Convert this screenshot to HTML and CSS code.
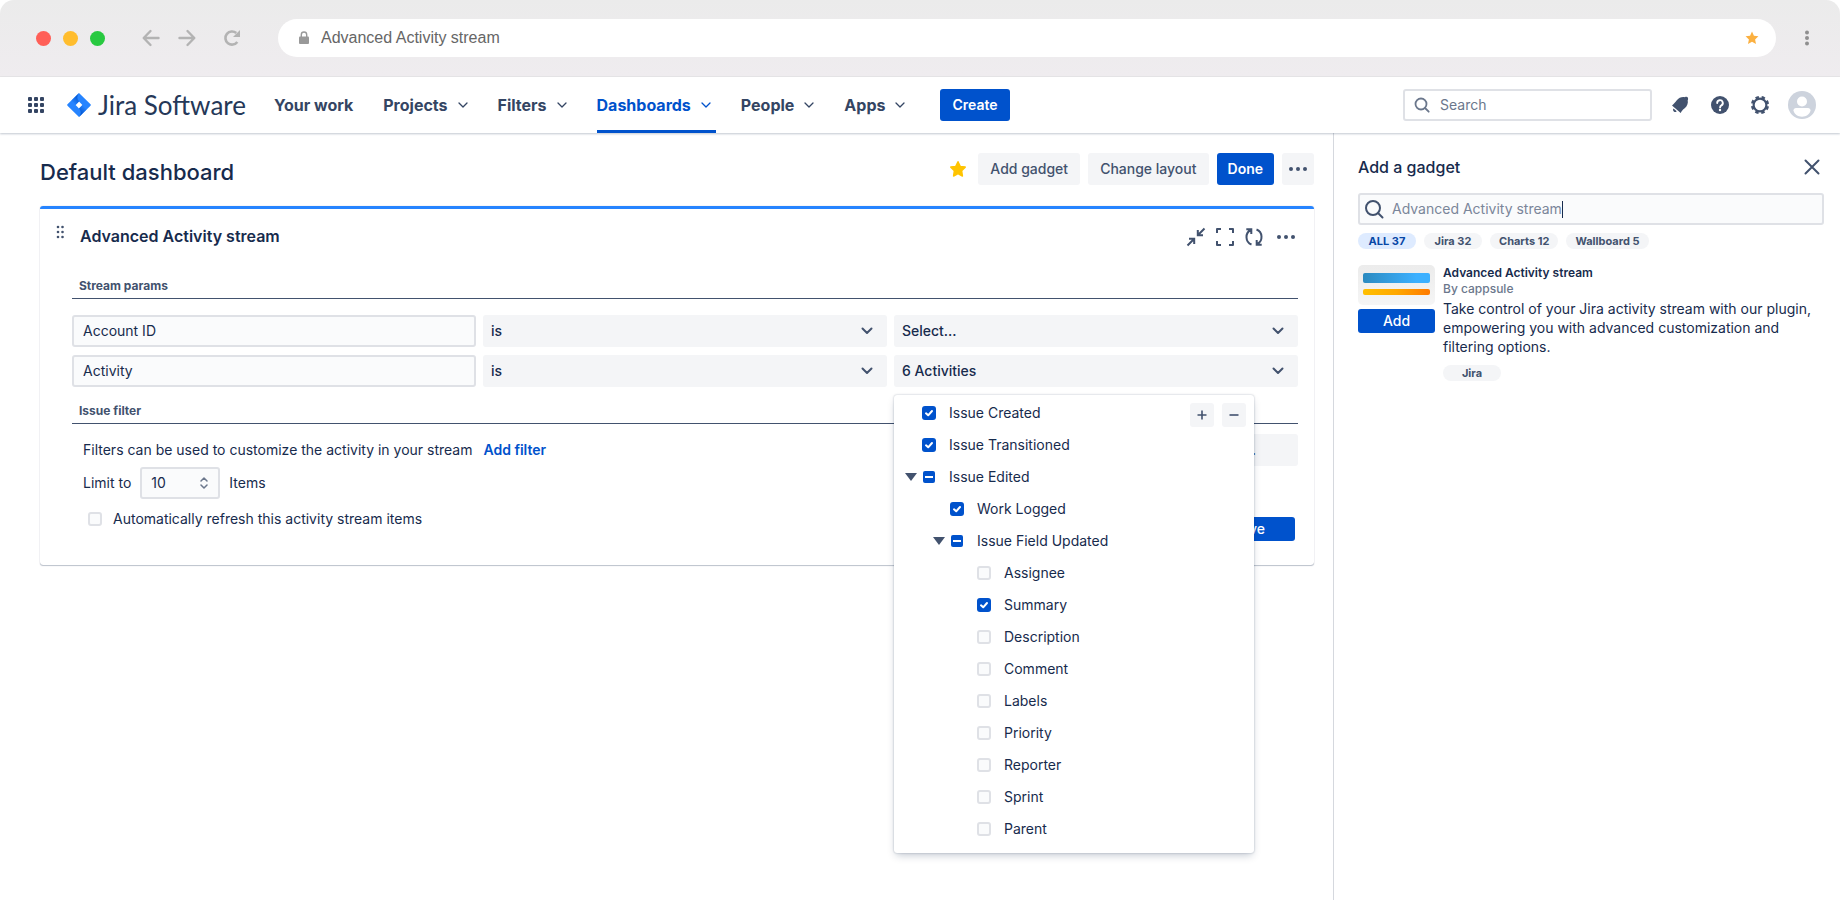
FILE: index.html
```html
<!DOCTYPE html>
<html lang="en">
  <head>
    <meta charset="UTF-8" />
    <meta name="viewport" content="width=device-width, initial-scale=1" />
    <title>Advanced Activity stream</title>
    <link rel="stylesheet" href="styles.css">
  </head>
  <body>
    <div class="chrome">
      <div class="lights">
        <span class="light red"></span>
        <span class="light yellow"></span>
        <span class="light green"></span>
      </div>
      <div class="history">
        <button class="plain" aria-label="Back">
          <svg width="18" height="18" viewBox="0 0 18 18" fill="none" stroke="#b3b3b3" stroke-width="2.4" stroke-linecap="round" stroke-linejoin="round"><path d="M16.5 9H2M8.5 2 1.700 9l6.800 7" /></svg>
        </button>
        <button class="plain" aria-label="Forward">
          <svg width="18" height="18" viewBox="0 0 18 18" fill="none" stroke="#b3b3b3" stroke-width="2.4" stroke-linecap="round" stroke-linejoin="round"><path d="M1.500 9H16M9.500 2l6.800 7-6.800 7" /></svg>
        </button>
        <button class="plain reload" aria-label="Reload">
          <svg width="18" height="18" viewBox="0 0 18 18"><path d="M14.300 13A6.600 6.600 0 1 1 13.300 4" fill="none" stroke="#b3b3b3" stroke-width="2.600" /><path d="M17 1v7h-7z" fill="#b3b3b3" /></svg>
        </button>
      </div>
      <div class="address">
        <svg width="12" height="14" viewBox="0 0 12 14"><rect x="1" y="5.500" width="10" height="7.500" rx="1" fill="#999" /><path d="M3.300 6V3.700a2.700 2.700 0 0 1 5.400 0V6" fill="none" stroke="#999" stroke-width="1.400" /></svg>
        <input type="text" aria-label="Address" value="Advanced Activity stream" />
        <svg width="14" height="14" viewBox="0 0 24 24" fill="#fbb040"><path d="M12 1l3.300 7.200 7.700.9-5.700 5.300 1.600 7.800L12 18.300l-6.900 3.900 1.600-7.800L1 9.100l7.700-.9z" /></svg>
      </div>
      <button class="plain" aria-label="Menu">
        <svg width="16" height="18" viewBox="0 0 16 18" fill="#8f8f8f"><circle cx="8" cy="3.500" r="2" /><circle cx="8" cy="9" r="2" /><circle cx="8" cy="14.500" r="2" /></svg>
      </button>
    </div>

    <header class="topbar">
      <button class="plain switcher" aria-label="Switch to">
        <svg width="16" height="16" viewBox="0 0 16 16" fill="#344563"><rect width="4" height="4" rx="1" /><rect x="6" width="4" height="4" rx="1" /><rect x="12" width="4" height="4" rx="1" /><rect y="6" width="4" height="4" rx="1" /><rect x="6" y="6" width="4" height="4" rx="1" /><rect x="12" y="6" width="4" height="4" rx="1" /><rect y="12" width="4" height="4" rx="1" /><rect x="6" y="12" width="4" height="4" rx="1" /><rect x="12" y="12" width="4" height="4" rx="1" /></svg>
      </button>
      <a class="logo" href="#">
        <svg width="24" height="26" viewBox="0 0 24 26">
          <defs>
            <linearGradient id="jiraTop" x1="12" y1="5" x2="6" y2="11" gradientUnits="userSpaceOnUse"><stop offset="0" stop-color="#0052cc" /><stop offset="1" stop-color="#2684ff" /></linearGradient>
            <linearGradient id="jiraBottom" x1="12" y1="21" x2="18" y2="15" gradientUnits="userSpaceOnUse"><stop offset="0" stop-color="#0052cc" /><stop offset="1" stop-color="#2684ff" /></linearGradient>
          </defs>
          <path d="M12 1 23.500 12.300a1 1 0 0 1 0 1.400L12 25 .5 13.700a1 1 0 0 1 0-1.400zM12 9.500 8.600 13l3.400 3.500 3.400-3.500z" fill="#2684ff" fill-rule="evenodd" />
          <path d="M12 9.500c-2.300-2.400-2.300-6.100 0-8.500L4.500 8.500l4 4.500z" fill="url(#jiraTop)" />
          <path d="M12 16.500c2.300 2.400 2.300 6.100 0 8.500l7.500-7.500-4-4.500z" fill="url(#jiraBottom)" />
        </svg>
        Jira Software
      </a>
      <nav class="menu">
        <a href="#">Your work</a>
        <a href="#">Projects<svg class="caret" viewBox="0 0 20 20"><path d="M6 8l4 4 4-4" /></svg></a>
        <a href="#">Filters<svg class="caret" viewBox="0 0 20 20"><path d="M6 8l4 4 4-4" /></svg></a>
        <a href="#" class="active">Dashboards<svg class="caret" viewBox="0 0 20 20"><path d="M6 8l4 4 4-4" /></svg></a>
        <a href="#">People<svg class="caret" viewBox="0 0 20 20"><path d="M6 8l4 4 4-4" /></svg></a>
        <a href="#">Apps<svg class="caret" viewBox="0 0 20 20"><path d="M6 8l4 4 4-4" /></svg></a>
      </nav>
      <button class="btn primary create">Create</button>
      <label class="search">
        <svg width="16" height="16" viewBox="0 0 16 16" fill="none" stroke="#6b778c" stroke-width="1.800" stroke-linecap="round"><circle cx="7" cy="7" r="5.500" /><path d="M11 11l3.700 3.700" /></svg>
        <input type="search" placeholder="Search" aria-label="Search" />
      </label>
      <div class="tools">
        <button class="plain" aria-label="Notifications">
          <svg width="20" height="20" viewBox="0 0 20 20" fill="#42526e"><path d="M2 10.500c1.500-1.200 3-2.800 4.600-5 2.200-3 5.600-3.900 8.300-3.300.8-.6 2.600-.5 2.900.2.400.8.400 2-.1 2.800.6 2.900-.4 6-3.300 8.200-2 1.500-2.900 2.700-3.700 4.600z" /><path d="M3.500 13.600a2 2 0 0 0 3.200 2.600z" /></svg>
        </button>
        <button class="plain" aria-label="Help">
          <svg width="20" height="20" viewBox="0 0 20 20"><circle cx="10" cy="10" r="9" fill="#42526e" /><path d="M7.200 8a2.800 2.800 0 1 1 4.200 2.400c-.9.500-1.300.9-1.300 2" fill="none" stroke="#fff" stroke-width="1.900" stroke-linecap="round" /><circle cx="10" cy="15" r="1.200" fill="#fff" /></svg>
        </button>
        <button class="plain" aria-label="Settings">
          <svg width="20" height="20" viewBox="0 0 20 20" fill="none" stroke="#42526e"><circle cx="10" cy="10" r="6.400" stroke-width="2.200" /><circle cx="10" cy="10" r="7.800" stroke-width="2.600" stroke-dasharray="3.400 2.726" stroke-dashoffset="-1.363" /></svg>
        </button>
        <button class="plain" aria-label="Your profile">
          <svg width="28" height="28" viewBox="0 0 28 28"><circle cx="14" cy="14" r="14" fill="#cdd3dd" /><circle cx="14" cy="10.500" r="5" fill="#fff" /><path d="M5.500 19.500c0-1.500 1-2.500 2.500-2.500h12c1.500 0 2.500 1 2.500 2.500-.6 3.600-4.300 6.200-8.500 6.200s-7.900-2.600-8.500-6.200z" fill="#fff" /></svg>
        </button>
      </div>
    </header>

    <div class="page">
      <main class="dashboard">
        <div class="dashboard-head">
          <h1>Default dashboard</h1>
          <button class="plain star" aria-label="Starred">
            <svg width="16" height="16" viewBox="0 0 16 16" fill="#ffc400" stroke="#ffc400" stroke-width="1.500" stroke-linejoin="round"><path d="M8 .8l2.200 4.600 5 .7-3.600 3.600.8 5.300L8 12.600l-4.400 2.400.8-5.300L.8 6.100l5-.7z" /></svg>
          </button>
          <button class="btn">Add gadget</button>
          <button class="btn">Change layout</button>
          <button class="btn primary">Done</button>
          <button class="btn more" aria-label="More">
            <svg width="20" height="8" viewBox="0 0 20 8" fill="#42526e"><circle cx="3" cy="4" r="2" /><circle cx="10" cy="4" r="2" /><circle cx="17" cy="4" r="2" /></svg>
          </button>
        </div>

        <section class="gadget">
          <div class="gadget-head">
            <svg class="drag" width="8" height="14" viewBox="0 0 8 14" fill="#42526e"><circle cx="2" cy="2" r="1.300" /><circle cx="6.500" cy="2" r="1.300" /><circle cx="2" cy="7" r="1.300" /><circle cx="6.500" cy="7" r="1.300" /><circle cx="2" cy="12" r="1.300" /><circle cx="6.500" cy="12" r="1.300" /></svg>
            <h2>Advanced Activity stream</h2>
            <button class="plain" aria-label="Minimize">
              <svg width="20" height="20" viewBox="0 0 20 20" fill="none" stroke="#42526e" stroke-width="2"><path d="M1.500 18.500l6-6M3 11.800h5.200V17M18.500 1.500l-6 6M17 8.200h-5.200V3" /></svg>
            </button>
            <button class="plain" aria-label="Maximize">
              <svg width="20" height="20" viewBox="0 0 20 20" fill="none" stroke="#42526e" stroke-width="2" stroke-linejoin="round"><path d="M2 6V2h4M14 2h4v4M18 14v4h-4M6 18H2v-4" /></svg>
            </button>
            <button class="plain" aria-label="Refresh">
              <svg width="20" height="20" viewBox="0 0 20 20" fill="none" stroke="#42526e" stroke-width="2"><path d="M7.500 17.500C1 15 1 6 6.500 3M2.300 2.200h5V7M12.500 2.500C19 5 19 14 13.500 17M17.700 17.800h-5V13" /></svg>
            </button>
            <button class="plain menu-dots" aria-label="More actions">
              <svg width="20" height="8" viewBox="0 0 20 8" fill="#42526e"><circle cx="3" cy="4" r="2" /><circle cx="10" cy="4" r="2" /><circle cx="17" cy="4" r="2" /></svg>
            </button>
          </div>

          <form class="gadget-body">
            <h3>Stream params</h3>
            <div class="params">
              <input class="field" type="text" aria-label="Param" value="Account ID" />
              <select class="select" aria-label="Account condition"><option>is</option></select>
              <select class="select" aria-label="Account"><option>Select...</option></select>
              <input class="field" type="text" aria-label="Param" value="Activity" />
              <select class="select" aria-label="Activity condition"><option>is</option></select>
              <div class="picker">
                <select class="select" aria-label="Activities"><option>6 Activities</option></select>
                <div class="tree">
                  <div class="tree-tools">
                    <button type="button" aria-label="Expand all"><svg width="10" height="10" viewBox="0 0 10 10" stroke="#42526e" stroke-width="1.600"><path d="M5 .5v9M.5 5h9" /></svg></button>
                    <button type="button" aria-label="Collapse all"><svg width="10" height="10" viewBox="0 0 10 10" stroke="#42526e" stroke-width="1.600"><path d="M.5 5h9" /></svg></button>
                  </div>
                  <label class="node"><input type="checkbox" checked />Issue Created</label>
                  <label class="node"><input type="checkbox" checked />Issue Transitioned</label>
                  <label class="node open"><input type="checkbox" class="partial" />Issue Edited</label>
                  <div class="branch">
                    <label class="node"><input type="checkbox" checked />Work Logged</label>
                    <label class="node open"><input type="checkbox" class="partial" />Issue Field Updated</label>
                    <div class="branch">
                      <label class="node"><input type="checkbox" />Assignee</label>
                      <label class="node"><input type="checkbox" checked />Summary</label>
                      <label class="node"><input type="checkbox" />Description</label>
                      <label class="node"><input type="checkbox" />Comment</label>
                      <label class="node"><input type="checkbox" />Labels</label>
                      <label class="node"><input type="checkbox" />Priority</label>
                      <label class="node"><input type="checkbox" />Reporter</label>
                      <label class="node"><input type="checkbox" />Sprint</label>
                      <label class="node"><input type="checkbox" />Parent</label>
                    </div>
                  </div>
                </div>
              </div>
            </div>

            <h3>Issue filter</h3>
            <div class="filter-row">
              <span>Filters can be used to customize the activity in your stream</span>
              <a href="#">Add filter</a>
              <button type="button" class="btn select-filter">Select...</button>
            </div>
            <div class="limit-row">
              <label for="limit">Limit to</label>
              <input class="field" id="limit" type="number" value="10" />
              <span>Items</span>
            </div>
            <div class="save-row">
              <label class="refresh"><input type="checkbox" />Automatically refresh this activity stream items</label>
              <button type="button" class="btn primary small save">Save</button>
            </div>
          </form>
        </section>
      </main>

      <aside class="panel">
        <div class="panel-head">
          <h2>Add a gadget</h2>
          <button class="plain" aria-label="Close">
            <svg width="24" height="24" viewBox="0 0 24 24" stroke="#42526e" stroke-width="2" stroke-linecap="round"><path d="M5.500 5.500l13 13M18.500 5.500l-13 13" /></svg>
          </button>
        </div>
        <label class="panel-search">
          <svg width="20" height="20" viewBox="0 0 20 20" fill="none" stroke="#42526e" stroke-width="2" stroke-linecap="round"><circle cx="9" cy="9" r="7" /><path d="M14 14l4.500 4.500" /></svg>
          <input type="text" aria-label="Search gadgets" value="Advanced Activity stream" />
          <span class="cursor"></span>
        </label>
        <div class="chips">
          <button class="chip selected">ALL 37</button>
          <button class="chip">Jira 32</button>
          <button class="chip">Charts 12</button>
          <button class="chip">Wallboard 5</button>
        </div>
        <article class="result">
          <div class="result-side">
            <div class="thumb">
              <span class="bar blue"></span>
              <span class="bar orange"></span>
            </div>
            <button class="btn primary small">Add</button>
          </div>
          <div class="result-text">
            <h4>Advanced Activity stream</h4>
            <p class="author">By cappsule</p>
            <p>Take control of your Jira activity stream with our plugin, empowering you with advanced customization and filtering options.</p>
            <span class="chip">Jira</span>
          </div>
        </article>
      </aside>
    </div>
  </body>
</html>
```

FILE: styles.css
```css
* {
  box-sizing: border-box;
}
body {
  margin: 0;
  min-height: 100vh;
  display: flex;
  flex-direction: column;
  font-family: Inter, Roboto, sans-serif;
  font-size: 14px;
  line-height: 20px;
  color: #172b4d;
  background: #fff;
}
h1,
h2,
h3,
h4,
p {
  margin: 0;
}
a {
  color: #0052cc;
  text-decoration: none;
}
button,
input,
select {
  font: inherit;
  color: inherit;
}
input {
  min-width: 0;
}
svg {
  display: block;
  flex: none;
}
.plain {
  padding: 0;
  border: none;
  background: none;
}

/* browser bar */
.chrome {
  display: flex;
  align-items: center;
  height: 77px;
  padding: 0 25px 0 36px;
  border-bottom: 1px solid #e8e7e8;
  border-radius: 14px 14px 0 0;
  background: linear-gradient(#ebebeb, #efecef);
}
.lights {
  display: flex;
  gap: 12px;
}
.light {
  width: 15px;
  height: 15px;
  border-radius: 50%;
}
.red {
  background: #ff5f57;
}
.yellow {
  background: #ffbd2e;
}
.green {
  background: #28c940;
}
.history {
  display: flex;
  gap: 18px;
  margin: 0 37px;
}
.reload {
  margin-left: 9px;
}
.address {
  flex: 1;
  display: flex;
  align-items: center;
  height: 38px;
  margin-right: 23px;
  padding: 0 17px 0 20px;
  border-radius: 19px;
  background: #fff;
}
.address input {
  flex: 1;
  margin-left: 11px;
  padding: 0;
  border: none;
  font-family: "Liberation Sans", Arial, sans-serif;
  font-size: 16px;
  color: #666;
}

/* top navigation */
.topbar {
  position: relative;
  display: flex;
  align-items: center;
  height: 56px;
  padding: 0 24px 0 28px;
  box-shadow: 0 1px 2px rgba(9, 30, 66, 0.25);
}
.logo {
  display: flex;
  align-items: center;
  gap: 7px;
  margin: 0 28px 0 23px;
  font-family: Lato, sans-serif;
  font-size: 26px;
  color: #253858;
  white-space: nowrap;
}
.menu {
  display: flex;
  gap: 25px;
  height: 100%;
}
.menu a {
  display: flex;
  align-items: center;
  gap: 5px;
  border-top: 3px solid transparent;
  border-bottom: 3px solid transparent;
  font-size: 16px;
  font-weight: 700;
  color: #344563;
  white-space: nowrap;
}
.menu a:first-child {
  margin-right: 5px;
}
.menu .active {
  border-bottom-color: #0052cc;
  color: #0052cc;
}
.caret {
  width: 20px;
  height: 20px;
  fill: none;
  stroke: currentColor;
  stroke-width: 1.3;
  stroke-linecap: round;
  stroke-linejoin: round;
}
.btn {
  height: 32px;
  padding: 0 12px;
  border: none;
  border-radius: 3px;
  background: #f4f5f7;
  font-weight: 500;
  color: #42526e;
  white-space: nowrap;
}
.primary {
  padding: 0 11px;
  background: #0052cc;
  font-weight: 600;
  color: #fff;
}
.small {
  height: 24px;
  font-weight: 500;
}
.create {
  margin-left: 30px;
  padding: 0 12px;
}
.search {
  display: flex;
  align-items: center;
  gap: 10px;
  width: 249px;
  height: 32px;
  margin-left: auto;
  padding: 0 9px;
  border: 2px solid #dfe1e6;
  border-radius: 3px;
}
.search input {
  flex: 1;
  padding: 0;
  border: none;
  background: none;
}
.search input::placeholder {
  color: #6b778c;
  opacity: 1;
}
.tools {
  display: flex;
  align-items: center;
  gap: 20px;
  margin-left: 18px;
}
.tools button:last-child {
  margin-left: -2px;
}

/* dashboard */
.page {
  flex: 1;
  display: flex;
}
.dashboard {
  flex: 1;
  padding: 20px 19px 40px 40px;
}
.dashboard-head {
  display: flex;
  align-items: center;
  gap: 8px;
  margin-bottom: 21px;
}
.dashboard-head h1 {
  flex: 1;
  padding-top: 6px;
  font-size: 22px;
  font-weight: 500;
  line-height: 26px;
}
.star {
  margin-right: 4px;
}
.more {
  width: 32px;
  padding: 0 6px;
}
.gadget {
  border-top: 3px solid #2684ff;
  border-radius: 3px;
  box-shadow: 0 1px 1px rgba(9, 30, 66, 0.25), 0 0 1px rgba(9, 30, 66, 0.31);
}
.gadget-head {
  display: flex;
  align-items: center;
  gap: 9px;
  height: 56px;
  padding: 0 18px 0 16px;
}
.gadget-head h2 {
  flex: 1;
  padding: 0 0 3px 7px;
}
.gadget-head h2,
.panel h2 {
  font-size: 16px;
  font-weight: 600;
}
.drag {
  margin-bottom: 11px;
}
.menu-dots {
  margin-left: 3px;
}
.gadget-body {
  padding: 0 16px 24px 32px;
}
.gadget-body h3 {
  padding: 11px 7px 2px;
  border-bottom: 1px solid #42526e;
  font-size: 12px;
  font-weight: 700;
  color: #42526e;
}
.params {
  display: grid;
  grid-template-columns: repeat(3, 1fr);
  gap: 8px 7px;
  margin: 16px 0 3px;
}
.field,
.select {
  width: 100%;
  height: 32px;
  border-radius: 3px;
}
.field {
  padding: 0 9px 1px;
  border: 2px solid #dfe1e6;
  background: #fafbfc;
}
.select {
  display: block;
  padding: 0 8px;
  border: none;
  appearance: none;
  font-weight: 500;
  background: #f4f5f7 url("data:image/svg+xml,%3Csvg xmlns='http://www.w3.org/2000/svg' width='12' height='8' fill='none' stroke='%2342526e' stroke-width='2' stroke-linecap='round' stroke-linejoin='round'%3E%3Cpath d='M1.500 1.500 6 6l4.500-4.500'/%3E%3C/svg%3E") no-repeat right 14px center;
}
.picker {
  position: relative;
}

/* activity tree dropdown */
.tree {
  position: absolute;
  top: 40px;
  left: 0;
  z-index: 1;
  width: 360px;
  padding: 2px 0 8px 28px;
  border-radius: 3px;
  background: #fff;
  box-shadow: 0 4px 8px -2px rgba(9, 30, 66, 0.25), 0 0 2px rgba(9, 30, 66, 0.31);
}
.tree-tools {
  position: absolute;
  top: 8px;
  right: 8px;
  display: flex;
  gap: 8px;
}
.tree-tools button {
  display: flex;
  align-items: center;
  justify-content: center;
  width: 24px;
  height: 24px;
  padding: 0;
  border: none;
  border-radius: 3px;
  background: #f4f5f7;
}
.node {
  position: relative;
  display: flex;
  align-items: center;
  gap: 13px;
  height: 32px;
}
.branch {
  padding-left: 28px;
}
.branch .branch {
  padding-left: 27px;
}
.open::before {
  content: "";
  position: absolute;
  left: -17px;
  border: 6px solid transparent;
  border-top: 8px solid #42526e;
  border-bottom: none;
}
input[type="checkbox"] {
  flex: none;
  width: 14px;
  height: 14px;
  margin: 0;
  border: 2px solid #dfe1e6;
  border-radius: 3px;
  appearance: none;
  background: #fafbfc;
}
input[type="checkbox"]:checked {
  border: none;
  background: #0052cc url("data:image/svg+xml,%3Csvg xmlns='http://www.w3.org/2000/svg' width='14' height='14' fill='none' stroke='white' stroke-width='2' stroke-linecap='round' stroke-linejoin='round'%3E%3Cpath d='M4 7.300 6.200 9.300 10 5'/%3E%3C/svg%3E") center;
}
input[type="checkbox"].partial {
  width: 12px;
  height: 12px;
  margin: 0 1px;
  border: none;
  border-radius: 2px;
  background: linear-gradient(#fff, #fff) center / 8px 2px no-repeat #0052cc;
}

.filter-row,
.limit-row {
  display: flex;
  align-items: center;
  height: 32px;
  padding-left: 11px;
}
.filter-row {
  gap: 11px;
  margin: 10px 0 1px;
}
.filter-row a {
  font-weight: 600;
}
.select-filter {
  margin-left: auto;
  padding: 0 42px;
}
.limit-row {
  gap: 9px;
}
.limit-row .field {
  width: 80px;
  appearance: textfield;
  background: #fafbfc url("data:image/svg+xml,%3Csvg xmlns='http://www.w3.org/2000/svg' width='8' height='12' fill='none' stroke='%236b778c' stroke-width='1.500' stroke-linecap='round' stroke-linejoin='round'%3E%3Cpath d='M1 4l3-3 3 3M1 8l3 3 3-3'/%3E%3C/svg%3E") no-repeat right 10px center;
}
.limit-row .field::-webkit-inner-spin-button {
  display: none;
}
.save-row {
  display: flex;
  align-items: flex-start;
  justify-content: space-between;
  margin-top: 8px;
  padding: 0 3px 0 16px;
}
.refresh {
  display: flex;
  align-items: center;
  gap: 11px;
  height: 24px;
}
.save {
  margin-top: 10px;
  padding: 0 30px;
}

/* add gadget panel */
.panel {
  width: 507px;
  padding: 22px 16px 0 24px;
  border-left: 1px solid #d5d8de;
}
.panel-head {
  display: flex;
  align-items: center;
  justify-content: space-between;
  margin-bottom: 14px;
}
.panel .panel-head h2 {
  font-weight: 500;
}
.panel-search {
  display: flex;
  align-items: center;
  height: 32px;
  padding: 0 4px;
  border: 2px solid #dfe1e6;
  border-radius: 3px;
  background: #fafbfc;
}
.panel-search input {
  field-sizing: content;
  margin-left: 8px;
  padding: 0;
  border: none;
  background: none;
  color: #7a869a;
}
.cursor {
  width: 1px;
  height: 17px;
  background: #172b4d;
}
.chips {
  display: flex;
  gap: 8px;
  margin: 8px 0 16px;
}
.chip {
  min-width: 58px;
  height: 16px;
  padding: 0 9px;
  border: none;
  border-radius: 8px;
  background: #f4f5f7;
  font-size: 11px;
  font-weight: 700;
  line-height: 16px;
  text-align: center;
  color: #42526e;
}
.selected {
  background: #deebff;
  color: #0747a6;
}
.result {
  display: flex;
  gap: 8px;
}
.result-side {
  flex: none;
  display: flex;
  flex-direction: column;
  gap: 4px;
  width: 77px;
}
.thumb {
  display: flex;
  flex-direction: column;
  gap: 6px;
  height: 40px;
  padding: 8px 5px;
  border-radius: 5px;
  background: linear-gradient(#ececec, #f5f5f5);
}
.bar {
  border-radius: 2px;
}
.blue {
  height: 10px;
  background: linear-gradient(90deg, #2b8ac0, #3cb0ff 80%);
}
.orange {
  height: 6px;
  background: linear-gradient(90deg, #ffbf00, #ffa800 50%, #ff7a00);
}
.result-text {
  line-height: 19px;
}
.result-text h4,
.author {
  font-size: 12px;
  line-height: 16px;
}
.result-text h4 {
  font-weight: 600;
}
.author {
  margin-bottom: 2px;
  font-weight: 500;
  color: #6b778c;
}
.result-text .chip {
  display: inline-block;
  margin-top: 9px;
}
```
